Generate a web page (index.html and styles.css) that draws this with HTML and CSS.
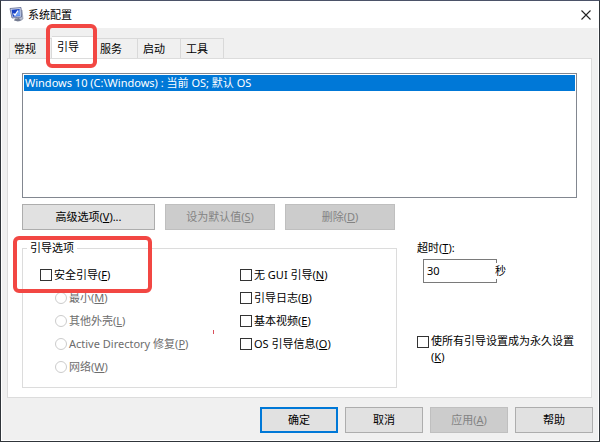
FILE: index.html
```
<!DOCTYPE html>
<html lang="zh-CN">
<head>
<meta charset="UTF-8">
<title>系统配置</title>
<link rel="stylesheet" href="styles.css">
</head>

<body>
<div class="window">
    <header class="titlebar">
        <svg class="app-icon" width="16" height="16" viewBox="0 0 16 16">
            <path d="M9 4l4-1 1 9-4 2z" fill="#b9bfd0" stroke="#8188a0" stroke-width=".6"/>
            <path d="M1 1.500l11-1 .5 9.500-9.500 1z" fill="#d5daea" stroke="#59658e" stroke-width=".8"/>
            <path d="M2.500 2.800l8.200-.7.400 6.800-7.300.8z" fill="#1741c4"/>
            <path d="M5 9l5.500-6.500h.5l.3 6.300z" fill="#6d9df5"/>
            <path d="M4.500 6.500l1.500 1.500 3-4.500" fill="none" stroke="#fff" stroke-width="1.300"/>
            <path d="M6 11.500l4-.5 1 1.500 2 .5-4 1.500-4-1z" fill="#747b91"/>
        </svg>
        <h1>系统配置</h1>
        <button class="close" type="button" aria-label="关闭">
            <svg width="10" height="10" viewBox="0 0 10 10"><path d="M.5.5l9 9M9.500.5l-9 9" stroke="#222" stroke-width="1.100"/></svg>
        </button>
    </header>

    <form class="content">
        <nav class="tabs">
            <button type="button" class="tab">常规</button>
            <button type="button" class="tab active">引导<span class="mark mark-tab"></span></button>
            <button type="button" class="tab">服务</button>
            <button type="button" class="tab">启动</button>
            <button type="button" class="tab">工具</button>
        </nav>

        <main class="panel">
            <ul class="os-list">
                <li class="selected">Windows 10 (C:\Windows) : 当前 OS; 默认 OS</li>
            </ul>

            <div class="os-actions">
                <button type="button" class="btn wide">高级选项(<u>V</u>)...</button>
                <button type="button" class="btn" disabled>设为默认值(<u>S</u>)</button>
                <button type="button" class="btn" disabled>删除(<u>D</u>)</button>
            </div>

            <div class="settings">
                <fieldset class="group">
                    <legend>引导选项</legend>
                    <span class="mark mark-boot"></span>
                    <span class="tick"></span>
                    <div class="options">
                        <label class="option"><input type="checkbox">安全引导(<u>F</u>)</label>
                        <label class="option sub"><input type="radio" name="safe" disabled>最小(<u>M</u>)</label>
                        <label class="option sub"><input type="radio" name="safe" disabled>其他外壳(<u>L</u>)</label>
                        <label class="option sub"><input type="radio" name="safe" disabled>Active Directory 修复(<u>P</u>)</label>
                        <label class="option sub"><input type="radio" name="safe" disabled>网络(<u>W</u>)</label>
                    </div>
                    <div class="options">
                        <label class="option"><input type="checkbox">无 GUI 引导(<u>N</u>)</label>
                        <label class="option"><input type="checkbox">引导日志(<u>B</u>)</label>
                        <label class="option"><input type="checkbox">基本视频(<u>E</u>)</label>
                        <label class="option"><input type="checkbox">OS 引导信息(<u>O</u>)</label>
                    </div>
                </fieldset>

                <div class="side">
                    <label for="timeout">超时(<u>T</u>):</label>
                    <div class="timeout">
                        <input type="text" id="timeout" value="30">
                        <span class="unit">秒</span>
                    </div>
                    <label class="permanent"><input type="checkbox"><span>使所有引导设置成为永久设置(<u>K</u>)</span></label>
                </div>
            </div>
        </main>

        <footer class="buttons">
            <button type="button" class="btn default">确定</button>
            <button type="button" class="btn">取消</button>
            <button type="button" class="btn" disabled>应用(<u>A</u>)</button>
            <button type="button" class="btn">帮助</button>
        </footer>
    </form>
</div>
</body>
</html>
```
FILE: styles.css
```
* {
    box-sizing: border-box;
}

body {
    margin: 0;
    background: #fff;
}

body,
button,
input {
    font-family: "Noto Sans", "Noto Sans CJK SC", sans-serif;
    font-size: 11px;
    line-height: 16px;
    color: #000;
}

u {
    text-underline-offset: 1px;
}

.window {
    display: flex;
    flex-direction: column;
    min-height: 100vh;
    border: 1px solid #30353a;
    border-top-color: #4b5268;
}

/* title bar */
.titlebar {
    display: flex;
    align-items: center;
    height: 27px;
    padding: 0 8px;
}

.titlebar h1 {
    flex: 1;
    margin: 0 0 0 3px;
    font-size: 11px;
    font-weight: normal;
}

.close {
    display: flex;
    padding: 0;
    border: 0;
    background: none;
}

/* tabs */
.content {
    flex: 1;
    margin: 0 1px 1px;
    padding: 8px 5px 6px;
    background: #f0f0f0;
}

.tabs {
    display: flex;
    align-items: flex-end;
    padding-left: 2px;
}

.tab {
    width: 43px;
    height: 20px;
    padding: 0 5px;
    border: 1px solid #d9d9d9;
    border-width: 1px 1px 0 0;
    background: #f0f0f0;
    text-align: left;
}

.tab:first-child {
    padding-left: 4px;
    border-left-width: 1px;
}

.tab.active {
    position: relative;
    height: 22px;
    padding-bottom: 2px;
    background: #fff;
}

.panel {
    margin-right: 1px;
    padding: 14px;
    padding-bottom: 9px;
    border: 1px solid #dcdcdc;
    background: #fff;
}

.os-list {
    height: 125px;
    margin: 0;
    padding: 1px;
    border: 1px solid #828790;
    list-style: none;
}

.selected {
    padding: 0 1px;
    background: #0078d7;
    color: #fff;
}

/* buttons */
.btn {
    width: 78px;
    height: 26px;
    padding: 0;
    border: 1px solid #adadad;
    background: #e1e1e1;
}

.btn:disabled {
    border-color: #bfbfbf;
    background: #ccc;
    color: #838383;
}

.btn.default {
    border: 2px solid #0078d7;
}

.os-actions {
    display: flex;
    gap: 10px;
    margin: 6px 0 10px;
}

.os-actions .btn {
    width: 110px;
}

.os-actions .wide {
    width: 133px;
}

/* boot options */
.settings {
    display: flex;
    gap: 20px;
}

.group {
    position: relative;
    display: flex;
    flex: 0 0 375px;
    min-width: 0;
    height: 148px;
    margin: 0;
    padding: 11px 16px 0;
    border: 1px solid #dcdcdc;
}

.group legend {
    margin-left: -12px;
    padding: 0 3px;
}

.options {
    display: flex;
    flex: none;
    flex-direction: column;
    gap: 7px;
    width: 200px;
}

.options:last-child {
    width: 130px;
}

.option {
    display: flex;
    align-items: center;
    height: 16px;
    white-space: nowrap;
}

.sub {
    padding-left: 15px;
    color: #6d6d6d;
}

input[type="checkbox"],
input[type="radio"] {
    appearance: none;
    flex: none;
    width: 12px;
    height: 12px;
    margin: 0 2px 0 1px;
    border: 1px solid #333;
    background: #fff;
}

input[type="radio"] {
    border-color: #ccc;
    border-radius: 50%;
}

/* timeout */
.side {
    flex: 1;
}

.timeout {
    position: relative;
    display: flex;
    align-items: center;
    margin: 3px 0 50px 6px;
}

.timeout input {
    width: 74px;
    height: 24px;
    padding: 0 3px 2px;
    border: 1px solid #7a7a7a;
}

.unit {
    margin-left: -2px;
    background: #fff;
}

.permanent {
    display: flex;
}

.permanent input[type="checkbox"] {
    margin: 3px 2px 0 0;
}

.buttons {
    display: flex;
    justify-content: flex-end;
    gap: 7px;
    padding-top: 9px;
}

/* red highlights */
.mark {
    position: absolute;
    border: 4px solid #f24743;
    border-radius: 6px;
    pointer-events: none;
}

.mark-tab {
    inset: -13px -3px -10px -6px;
}

.mark-boot {
    top: -20px;
    left: -10px;
    width: 139px;
    height: 57px;
}

.tick {
    position: absolute;
    top: 74px;
    left: 190px;
    width: 1px;
    height: 4px;
    background: #d9515c;
}
```
